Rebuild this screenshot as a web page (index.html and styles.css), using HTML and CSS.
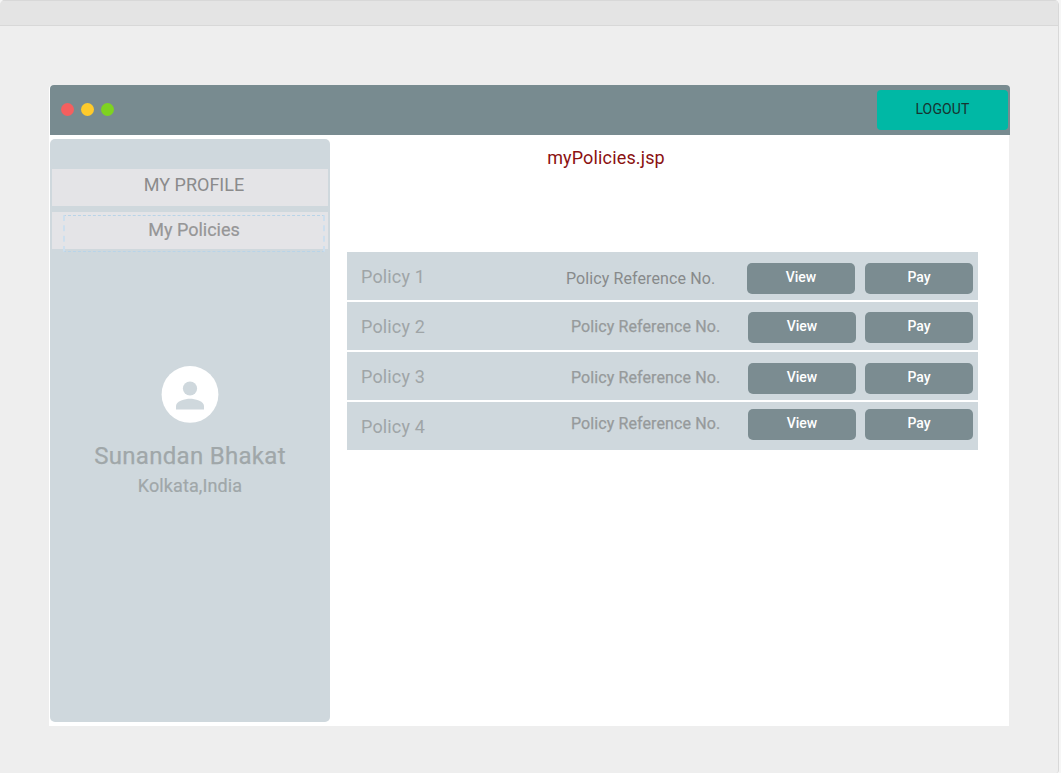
FILE: index.html
```html
<!DOCTYPE html>
<html lang="en">
<head>
<meta charset="utf-8">
<title>myPolicies.jsp</title>
<link rel="stylesheet" href="styles.css">
</head>
<body>
<div class="browser">
  <div class="browser-bar"></div>
  <div class="app">
    <header class="topbar">
      <span class="dot red"></span><span class="dot yellow"></span><span class="dot green"></span>
      <button class="logout">LOGOUT</button>
    </header>
    <div class="body">
      <aside class="sidebar">
        <nav class="menu">
          <a class="menu-item">MY PROFILE</a>
          <a class="menu-item active">My Policies</a>
        </nav>
        <svg class="avatar" viewBox="0 0 58 58">
          <circle cx="29" cy="29.400" r="28.4" fill="#fff"/>
          <circle cx="29" cy="23.500" r="7.1" fill="#cfd8dd"/>
          <path d="M15 44.500v-3.500c0-4.700 9.300-7.200 14-7.200s14 2.500 14 7.200V44.500z" fill="#cfd8dd"/>
        </svg>
        <div class="name"><span>Sunandan Bhakat</span></div>
        <div class="place"><span>Kolkata,India</span></div>
      </aside>
      <main class="content">
        <h1 class="title">myPolicies.jsp</h1>
        <div class="policies">
          <div class="row first"><span class="policy">Policy 1</span><span class="ref">Policy Reference No.</span><button class="btn view">View</button><button class="btn">Pay</button></div>
          <div class="row second"><span class="policy">Policy 2</span><span class="ref">Policy Reference No.</span><button class="btn view">View</button><button class="btn">Pay</button></div>
          <div class="row third"><span class="policy">Policy 3</span><span class="ref">Policy Reference No.</span><button class="btn view">View</button><button class="btn">Pay</button></div>
          <div class="row fourth"><span class="policy">Policy 4</span><span class="ref">Policy Reference No.</span><button class="btn view">View</button><button class="btn">Pay</button></div>
        </div>
      </main>
    </div>
  </div>
</div>
</body>
</html>
```
FILE: styles.css
```css
*, *::after { box-sizing: border-box; }
body { margin: 0; height: 773px; overflow: hidden; background: #f6f6f6; font-family: Roboto, "Liberation Sans", sans-serif; }
button { border: 0; padding: 0; font-family: inherit; }
.browser { width: 1059px; height: 773px; background: #eee; border-right: 1px solid #d8d8d8; border-radius: 5px 5px 3px 0; overflow: hidden; }
.browser-bar { height: 26px; background: #e4e4e4; border-top: 1px solid #d8d8d8; border-bottom: 1px solid #d8d8d8; }
.app { width: 961px; height: 641px; margin: 59px 0 0 49px; background: linear-gradient(#fff, #fff) 0 0 / 960px 641px no-repeat; border-radius: 4px 4px 0 0; }
.topbar { display: flex; align-items: center; width: 960px; height: 50px; margin-left: 1px; padding: 0 2px 0 11px; background: #788b90; border-radius: 4px 4px 0 0; }
.dot { width: 13px; height: 13px; margin: 0 7px 1px 0; border-radius: 50%; }
.red { background: #f55f5f; }
.yellow { background: #ffcb2b; }
.green { background: #7ed321; }
.logout { width: 131px; height: 40px; margin-left: auto; padding-bottom: 2px; border-radius: 4px; background: #00b8a5; color: #173330; font-size: 14px; letter-spacing: .15px; }
.body { display: flex; gap: 17px; padding: 4px 0 0 1px; }
.sidebar { display: flex; flex-direction: column; align-items: center; width: 280px; height: 583px; padding-top: 30px; border-radius: 5px; background: #cfd8dd; color: #a0a7a9; }
.menu { display: grid; gap: 6px; width: 276px; }
.menu-item { position: relative; height: 37px; padding-left: 8px; background: #e4e4e7; color: #8b8b8c; font-size: 18px; line-height: 32px; text-align: center; }
.active { line-height: 36px; color: #969697; -webkit-text-stroke: .2px #969697; }
.active::after { content: ""; position: absolute; left: 11px; top: 3px; width: 262px; height: 37px; border: 1px dashed #b8d4e8; border-left: 2px dashed #cddfee; border-right: 2px dashed #cddfee; }
.avatar { width: 58px; height: 58px; margin-top: 116px; }
.name { margin-top: 17px; font-size: 24px; line-height: 33px; letter-spacing: .3px; -webkit-text-stroke: .25px #a0a7a9; }
.place { margin-top: 1px; font-size: 18px; line-height: 24px; letter-spacing: .1px; -webkit-text-stroke: .2px #a0a7a9; }
.content { width: 631px; }
.title { width: 518px; height: 36px; margin: 0; color: #8b1111; font-size: 18px; font-weight: 400; line-height: 38px; letter-spacing: .15px; text-align: center; }
.policies { display: grid; gap: 2px; margin-top: 77px; }
.row { display: flex; align-items: flex-start; height: 48px; padding-left: 14px; background: #cfd8dd; }
.policy { width: 205px; color: #9fa5a7; font-size: 18px; line-height: 50px; letter-spacing: .15px; }
.ref { width: 181px; color: #878a8b; font-size: 16px; line-height: 53px; letter-spacing: .1px; white-space: nowrap; }
.btn { width: 108px; height: 31px; padding-bottom: 4px; border-radius: 5px; background: #7b8c91; color: #fff; font-size: 14px; font-weight: 500; }
.view { margin-right: 10px; }
.first .btn { margin-top: 11px; }
.second .btn { margin-top: 10px; }
.third .btn { margin-top: 11px; }
.fourth .btn { margin-top: 7px; }
.second .ref, .third .ref, .fourth .ref { width: 177px; margin-left: 5px; color: #969a9b; -webkit-text-stroke: .25px #969a9b; }
.second .ref { line-height: 50px; }
.third .ref { line-height: 52px; }
.fourth .ref { line-height: 44px; }
.second .view, .third .view, .fourth .view { margin-right: 9px; }
```
